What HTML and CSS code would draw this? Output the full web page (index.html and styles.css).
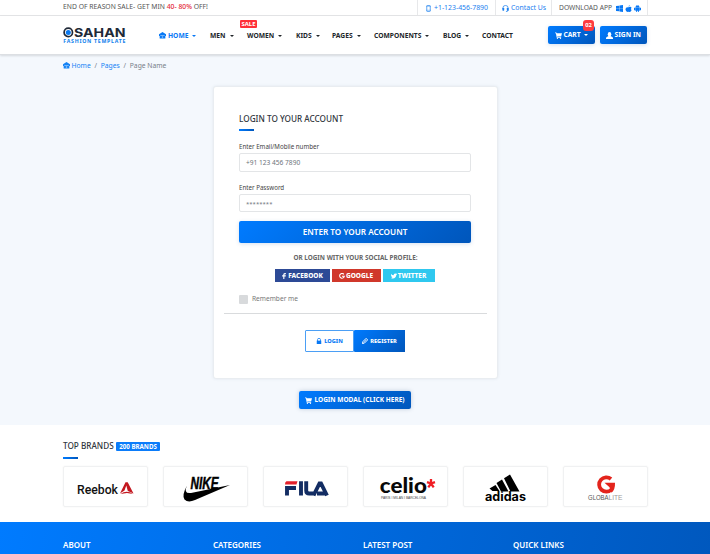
FILE: index.html
```
<!DOCTYPE html>
<html lang="en">
<head>
<meta charset="utf-8">
<title>Osahan Fashion - Login</title>
<link rel="stylesheet" href="styles.css">
</head>
<body>
<svg class="defs" aria-hidden="true">
  <symbol id="home" viewBox="0 0 16 16"><path d="M8 0 16 5v4h-1.500v6h-13V9H0V5z"/><path d="M3 8h10" stroke="#fff" stroke-width="1" fill="none"/><path d="M6.500 10h3v3h-3z" fill="#fff" opacity=".6"/></symbol>
  <symbol id="cart" viewBox="0 0 16 16"><path d="M0 1h3l1 2h12l-2 7H5l.5 1.500H14V13H4L2 3H0z"/><circle cx="5.500" cy="14.500" r="1.500"/><circle cx="12.500" cy="14.500" r="1.500"/></symbol>
  <symbol id="user" viewBox="0 0 16 16"><ellipse cx="8" cy="5" rx="4" ry="5"/><path d="M0 16v-3q0-2 6-4h4q6 2 6 4v3z"/></symbol>
  <symbol id="phone" viewBox="0 0 16 16"><rect x="4" y="1" width="8" height="14" rx="1.500" fill="none" stroke="currentColor" stroke-width="1.600"/><path d="M3 3h10M3 12h10" stroke="currentColor"/></symbol>
  <symbol id="headset" viewBox="0 0 16 16"><path d="M2 10V7a6 6 0 0 1 12 0v5q0 3-5 3" fill="none" stroke="currentColor" stroke-width="1.700"/><rect x="1" y="7" width="4" height="6" rx="1"/><rect x="11" y="7" width="4" height="6" rx="1"/></symbol>
  <symbol id="windows" viewBox="0 0 16 16"><path d="M0 2.500 7.300 1.500V7.500H0zM8 1.300 16 0v7.500H8zM0 8.200h7.300v6.300L0 13.500zM8 8.200h8V16l-8-1.200z"/></symbol>
  <symbol id="apple" viewBox="0 0 16 16"><path d="M11 0q0 3-3 4 0-3 3-4M8 5q5-2 7 1-3 3 0 6-2 4-4 4-3-1-5 0Q2 15 1 10q0-6 7-5"/></symbol>
  <symbol id="android" viewBox="0 0 16 16"><path d="M3 5q1-3 3-3.500L5 0h1l1 1h2l1-1h1l-1 1.500Q12 2 13 5zM3 5.500h10v7.500h-2v3H9v-3H7v3H5v-3H3zM0 6h2.500v6H0zM13.500 6H16v6h-2.500z"/></symbol>
  <symbol id="facebook" viewBox="0 0 10 16"><path d="M3 16V9H0V6h3V4q0-4 4-4h3v3H8Q6 3 6 4.500V6h4l-.5 3H6v7z"/></symbol>
  <symbol id="google" viewBox="0 0 16 16"><path d="M13 3.500A6.300 6.300 0 1 0 14.300 8.500H8" fill="none" stroke="currentColor" stroke-width="2.800"/></symbol>
  <symbol id="twitter" viewBox="0 0 16 16"><path d="M0 2q3 4 7 4 0-5 4-5 2 0 3 1l2-.5-1 2 1 .5-2 2q-1 8-9 8.500-3 0-5-1.500 3 0 4-1.500-2 0-3-2.500h1Q0 7 0 5l1 .5Q-.5 4 0 2"/></symbol>
  <symbol id="lock" viewBox="0 0 16 16"><path d="M4 8V4.500q0-3.500 4-3.500t4 3.500V8" fill="none" stroke="currentColor" stroke-width="2"/><path d="M2 7h12v9H2z"/></symbol>
  <symbol id="pencil" viewBox="0 0 16 16"><path d="m1 15 1.500-5.500L11 1l4 4-8.500 8.500z" fill="none" stroke="currentColor" stroke-width="2.600"/><path d="m4 12 7-7" stroke="currentColor" stroke-width="1.500"/></symbol>
</svg>

<div class="topbar"><div class="container topbar-row">
  <p class="promo">END OF REASON SALE- GET MIN <b>40- 80%</b> OFF!</p>
  <a class="cell phone"><svg class="ic"><use href="#phone"/></svg><span>+1-123-456-7890</span></a>
  <a class="cell contact"><svg class="ic"><use href="#headset"/></svg><span>Contact Us</span></a>
  <div class="cell apps"><span>DOWNLOAD APP</span><svg class="ic"><use href="#windows"/></svg><svg class="ic"><use href="#apple"/></svg><svg class="ic"><use href="#android"/></svg></div>
</div></div>

<header class="header"><div class="container header-row">
  <svg class="logo" viewBox="0 0 64 20">
    <circle cx="5.300" cy="6.400" r="4.200" fill="#fff" stroke="#212a38" stroke-width="1.700"/><circle cx="5.300" cy="6.400" r="2.500" fill="#0878f0"/>
    <text class="logo-name" x="11" y="11" textLength="51.500" lengthAdjust="spacingAndGlyphs">SAHAN</text>
    <text class="logo-tag" x="0.300" y="17.400" textLength="62" lengthAdjust="spacing">FASHION TEMPLATE</text>
  </svg>
  <nav class="nav">
    <a class="active drop"><svg class="ic"><use href="#home"/></svg>HOME</a>
    <a class="drop">MEN</a>
    <a class="drop women">WOMEN<span class="sale">SALE</span></a>
    <a class="drop">KIDS</a>
    <a class="drop">PAGES</a>
    <a class="drop">COMPONENTS</a>
    <a class="drop">BLOG</a>
    <a>CONTACT</a>
  </nav>
  <a class="btn cart drop"><svg class="ic"><use href="#cart"/></svg>CART<span class="count">02</span></a>
  <a class="btn signin"><svg class="ic"><use href="#user"/></svg>SIGN IN</a>
</div></header>

<main class="page">
  <div class="container crumbs"><a><svg class="ic"><use href="#home"/></svg>Home</a><i>/</i><a>Pages</a><i>/</i><span>Page Name</span></div>
  <section class="card">
    <h1 class="title">LOGIN TO YOUR ACCOUNT</h1>
    <label class="label">Enter Email/Mobile number</label>
    <div class="field">+91 123 456 7890</div>
    <label class="label second">Enter Password</label>
    <div class="field pass">********</div>
    <a class="btn enter">ENTER TO YOUR ACCOUNT</a>
    <p class="or">OR LOGIN WITH YOUR SOCIAL PROFILE:</p>
    <div class="social">
      <a class="fb"><svg class="ic"><use href="#facebook"/></svg>FACEBOOK</a>
      <a class="gg"><svg class="ic"><use href="#google"/></svg>GOOGLE</a>
      <a class="tw"><svg class="ic"><use href="#twitter"/></svg>TWITTER</a>
    </div>
    <div class="remember"><span class="box"></span>Remember me</div>
    <div class="rule"></div>
    <div class="tabs">
      <a class="tab"><svg class="ic"><use href="#lock"/></svg>LOGIN</a>
      <a class="tab on"><svg class="ic"><use href="#pencil"/></svg>REGISTER</a>
    </div>
  </section>
  <a class="btn modal"><svg class="ic"><use href="#cart"/></svg>LOGIN MODAL (CLICK HERE)</a>
</main>

<section class="container brands">
  <h2 class="title"><span>TOP BRANDS</span><span class="pill">200 BRANDS</span></h2>
  <div class="brand-row">
    <div class="brand"><svg viewBox="0 0 85 40">
      <text class="reebok" x="14" y="26.500" textLength="41" lengthAdjust="spacingAndGlyphs">Reebok</text>
      <path d="M62.500 15.200h2.200L70.500 26.500 64.800 24 63.300 18.500 61.500 23.500 57 26.500zM57.500 27q6-4.500 12.500 0l-6-1z" fill="#c31820"/>
    </svg></div>
    <div class="brand"><svg viewBox="0 0 85 40">
      <text class="nike" x="27.500" y="22.300" textLength="28" lengthAdjust="spacingAndGlyphs">NIKE</text>
      <path d="M24 18.500q-4 8.500 4 7.500l39-8-35 15q-7 3-10.500-.5-3-4 2.500-14" fill="#000"/>
    </svg></div>
    <div class="brand"><svg viewBox="0 0 85 40">
      <path d="M23.500 14.300H34.500l-1 3.200H22q0-3 1.500-3.200" fill="#e3202b"/>
      <path d="M24 28.500V21h9M38 14.300v14.200M43.200 14.300v9.200q0 3 3 3h5.800M50.500 28.500 56.500 16.500h1.500L64 28.500M54 26.500h9" fill="none" stroke="#132d63" stroke-width="3.900"/>
    </svg></div>
    <div class="brand"><svg viewBox="0 0 85 40">
      <text class="celio" x="16.800" y="26.200" textLength="47" lengthAdjust="spacingAndGlyphs">celio</text>
      <path d="M68 16.500v-4.500M68 16.500l4-1.400M68 16.500l2.700 3.800M68 16.500l-2.700 3.800M68 16.500l-4-1.400" stroke="#f01f25" stroke-width="2.300" fill="none"/>
      <text class="paris" x="18" y="32" textLength="45" lengthAdjust="spacingAndGlyphs">PARIS I MILAN I BARCELONA</text>
    </svg></div>
    <div class="brand"><svg viewBox="0 0 85 40">
      <path d="m26.500 21.500 6-3.500 4 6h-7zM33.500 16l5.500-3.500L45.500 24.500H38zM41 11.300l6-3.800L56.500 24.500H47.500z" fill="#000"/>
      <text class="adidas" x="22" y="34" textLength="41" lengthAdjust="spacingAndGlyphs">adidas</text>
    </svg></div>
    <div class="brand"><svg viewBox="0 0 85 40">
      <path d="M48 12A7.200 7.200 0 1 0 48.500 22.500" fill="none" stroke="#e3241c" stroke-width="3.800"/>
      <path d="M41.500 15.700H52q.3 7-3.500 10l-2-5.500z" fill="#e3241c"/>
      <text class="globa" x="25" y="33.300" textLength="20.500" lengthAdjust="spacingAndGlyphs">GLOBA</text><text class="lite" x="45.500" y="33.300" textLength="14" lengthAdjust="spacingAndGlyphs">LITE</text>
    </svg></div>
  </div>
</section>

<footer class="footer"><div class="container footer-row">
  <h3>ABOUT</h3><h3>CATEGORIES</h3><h3>LATEST POST</h3><h3>QUICK LINKS</h3>
</div></footer>
</body>
</html>
```
FILE: styles.css
```
* { box-sizing: border-box; }
body { margin: 0; height: 554px; overflow: hidden; background: #fff; font: 7px/10px "Noto Sans", "Open Sans", sans-serif; color: #555; }
p, h1, h2, h3 { margin: 0; font-weight: 400; }
.defs { position: absolute; width: 0; height: 0; }
.ic { width: 7px; height: 7px; fill: currentColor; flex: none; }
.container { width: 585px; margin: 0 auto 0 63px; }

.topbar { height: 16px; border-bottom: 1px solid #e4e5e7; }
.topbar-row { display: flex; height: 15px; }
.promo { flex: 1; font-size: 6.800px; line-height: 14px; white-space: nowrap; }
.promo b { color: #e42937; font-weight: 500; }
.cell { display: flex; align-items: center; height: 15px; padding-top: 1px; border-left: 1px solid #e7e8ea; white-space: nowrap; color: #1b80ef; font-size: 6.900px; }
.phone { width: 78px; padding-left: 7px; gap: 2px; }
.contact { width: 56px; padding-left: 6px; gap: 2px; }
.apps { width: 97px; padding-left: 7px; gap: 2px; border-right: 1px solid #e7e8ea; font-size: 6.700px; }
.apps span { color: #555; width: 55px; }
.apps .ic { color: #0878f5; }

.header { height: 39px; background: #fff; border-bottom: 1px solid #dcdfe3; box-shadow: 0 1px 2px rgba(0,0,0,.12); position: relative; }
.header-row { display: flex; height: 38px; align-items: center; }
.logo { width: 64px; height: 20px; margin-right: 32px; margin-top: 2px; overflow: visible; }
.logo-name { font: 700 12.400px Inter, sans-serif; fill: #212a38; }
.logo-tag { font: 700 5.200px "Noto Sans", sans-serif; fill: #0e80ec; }
.nav { display: grid; grid-template-columns: 51px 37px 49px 36px 42px 69px 39px 66px; font-weight: 700; font-size: 6.700px; color: #212529; }
.nav a { display: flex; align-items: center; position: relative; padding-top: 1px; }
.nav .active { color: #0878f5; }
.nav .ic { margin-right: 2px; }
.drop::after { content: ""; margin-left: 4px; border: 2px solid transparent; border-top-color: currentColor; border-bottom: 0; }
.sale { position: absolute; left: -7px; top: -10px; width: 17px; height: 8px; border-radius: 1px; background: #ff3038; color: #fff; font-size: 5.900px; line-height: 8px; text-align: center; }
.btn { display: flex; align-items: center; justify-content: center; border-radius: 2px; color: #fff; font-weight: 700; background: linear-gradient(135deg, #007bff, #0056bb); box-shadow: 0 1px 4px rgba(30,90,170,.18); white-space: nowrap; }
.cart, .signin { height: 18px; width: 47px; font-size: 6.700px; gap: 1.500px; }
.cart { position: relative; margin-right: 5px; }
.cart::after { margin-left: 2px; }
.count { position: absolute; left: 35px; top: -6px; width: 11px; height: 11px; border-radius: 3px; background: #ff3b40; font-size: 5.800px; line-height: 11px; text-align: center; }

.page { height: 370px; background: #f4f8fd; padding-top: 5px; }
.crumbs { display: flex; height: 11px; align-items: center; color: #788089; font-size: 6.750px; }
.crumbs a { display: flex; align-items: center; gap: 1.500px; color: #1583f5; }
.crumbs i { font-style: normal; width: 10px; text-align: center; }
.card { width: 285px; height: 293px; margin: 15px 0 0 213px; padding: 27px 25px 0; background: #fff; border: 1px solid #e9edf1; border-radius: 3px; box-shadow: 0 0 3px rgba(60,80,110,.1); }
.title { font-size: 8.200px; line-height: 10px; color: #30363d; font-weight: 500; }
.title::after { content: ""; display: block; width: 15px; height: 2px; background: linear-gradient(90deg, #007bff, #0056bb); }
.card .title { height: 26px; }
.card .title::after { margin-top: 5px; }
.label { display: block; height: 11px; font-size: 6.200px; line-height: 10px; margin-top: 2px; color: #444; }
.card .second { margin-top: 11px; }
.field { width: 232px; height: 19px; border: 1px solid #e3e5e7; border-radius: 2px; padding-left: 6px; font-size: 6.600px; line-height: 18px; color: #6d747b; }
.card .pass { height: 18px; }
.pass { font-size: 6px; }
.enter { width: 232px; height: 22px; margin-top: 9px; font-size: 8.200px; font-weight: 600; }
.or { margin-top: 10px; text-align: center; font-weight: 700; font-size: 6.350px; color: #666; }
.social { display: flex; justify-content: center; gap: 2px; margin: 6px 2px 0 0; }
.social a { display: flex; align-items: center; justify-content: center; height: 13px; gap: 1px; color: #fff; font-size: 6.500px; font-weight: 800; }
.social .ic { width: 6px; height: 6px; }
.social .fb { width: 55px; background: #2d4a96; }
.social .gg { width: 49px; background: #d0382b; }
.social .tw { width: 52px; background: #2fc8ef; }
.remember { display: flex; align-items: center; height: 10px; margin-top: 12px; gap: 4px; color: #777; font-size: 6.600px; }
.box { width: 9px; height: 9px; border-radius: 1px; background: #d8dadc; }
.rule { height: 1px; margin: 9px -15px 0; background: #d9dbdd; }
.tabs { display: flex; margin: 16px 0 0 66px; }
.tab { display: flex; align-items: center; justify-content: center; width: 49px; height: 22px; border: 1px solid #4b9ff5; border-radius: 1px 0 0 1px; font-size: 5.600px; font-weight: 800; gap: 2px; color: #0878f5; }
.tab .ic { width: 6px; height: 6px; }
.tab.on { width: 51px; border: 0; color: #fff; background: linear-gradient(135deg, #007bff, #0056bb); }
.modal { width: 112px; height: 18px; margin: 12px 0 0 299px; font-size: 6.500px; font-weight: 700; gap: 2px; box-shadow: 0 0 4px rgba(40,70,120,.25); }

.brands { height: 97px; padding-top: 16px; }
.brands .title { display: grid; grid-template-columns: 53px 44px; height: 25px; grid-template-rows: 11px 8px; }
.brands .title::after { margin-top: 5px; }
.pill { height: 9px; margin-top: 1px; border-radius: 1px; background: #0b7cfa; color: #fff; font-size: 6.200px; font-weight: 700; line-height: 9px; text-align: center; }
.brand-row { display: grid; grid-template-columns: repeat(6, 85px); gap: 15px; }
.brand { height: 41px; border: 1px solid #f0f1f2; border-radius: 2px; box-shadow: 0 0 2px rgba(0,0,0,.06); }
.brand svg { display: block; width: 85px; height: 40px; margin: 0 -1px -1px; }
.reebok { font: 500 12.500px Roboto, sans-serif; fill: #111; }
.nike { font: italic 700 16.500px "Liberation Sans Narrow", "Liberation Sans", sans-serif; stroke: #000; stroke-width: .5px; }
.celio { font: 900 20px Lato, sans-serif; fill: #080808; }
.paris { font: 3.700px "Liberation Sans", sans-serif; fill: #444; }
.adidas { font: 700 12.500px Inter, sans-serif; fill: #000; }
.globa { font: 6.800px "Liberation Sans", sans-serif; fill: #555; }
.lite { font: 6.800px "Liberation Sans", sans-serif; fill: #999; }

.footer { height: 40px; background: linear-gradient(100deg, #007bff, #0058be); color: #fff; }
.footer-row { display: grid; grid-template-columns: repeat(4, 150px); padding-top: 17px; }
.footer h3 { font-size: 8px; line-height: 11px; font-weight: 600; }
```
